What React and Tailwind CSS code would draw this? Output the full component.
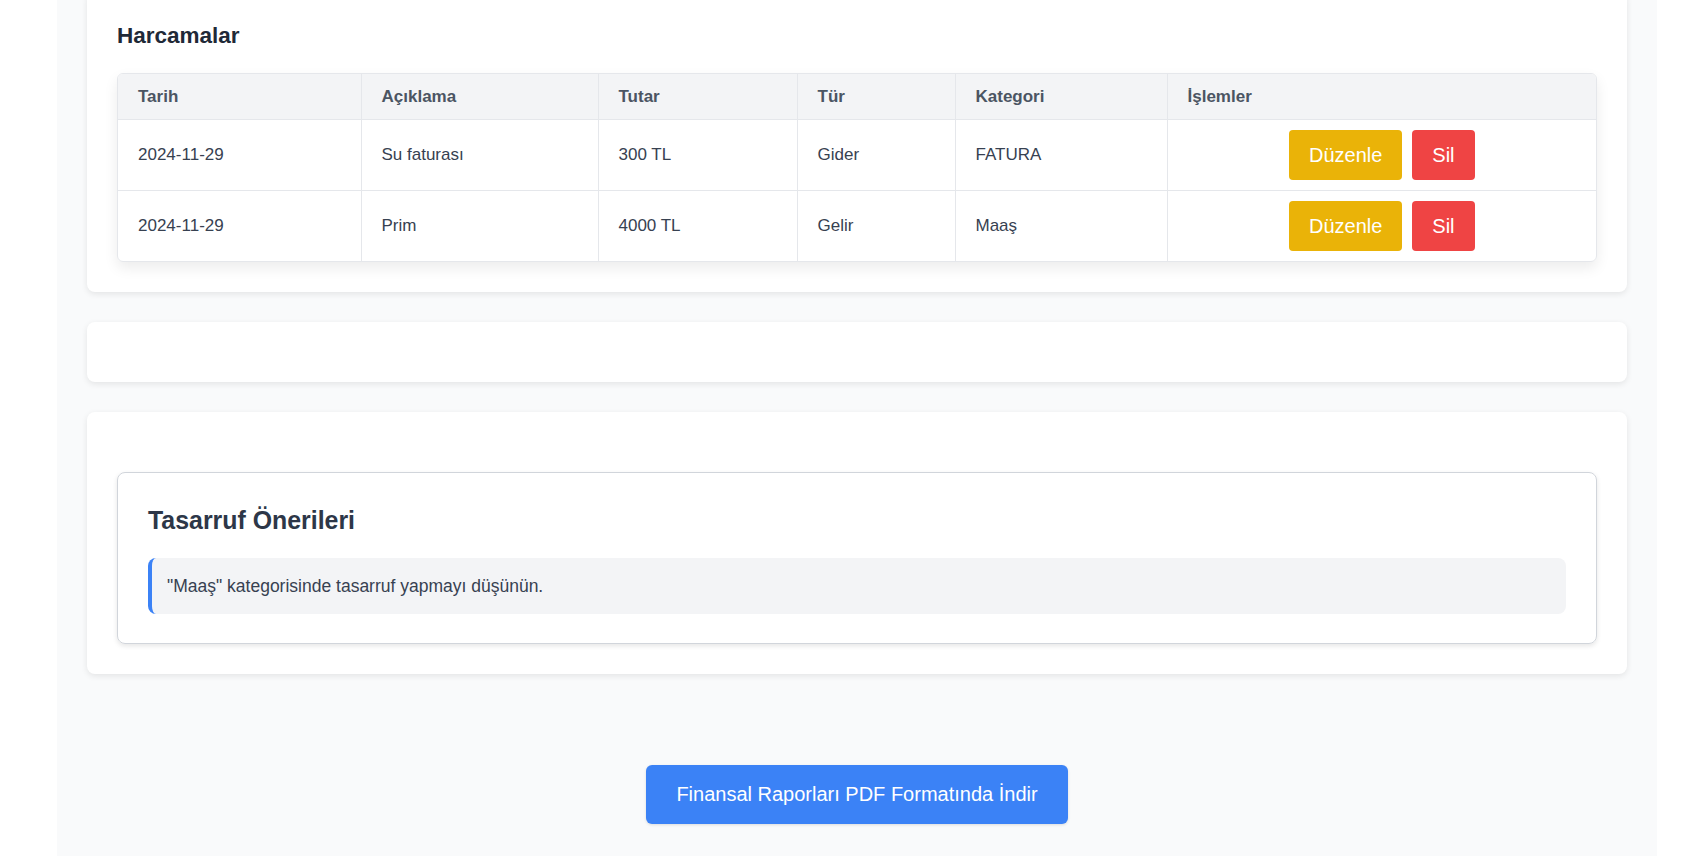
import React from 'react';

// ─── Data ────────────────────────────────────────────────────────
const columns = [
  { label: 'Tarih',    w: 'w-[243px]' },
  { label: 'Açıklama', w: 'w-[237px]' },
  { label: 'Tutar',    w: 'w-[199px]' },
  { label: 'Tür',      w: 'w-[158px]' },
  { label: 'Kategori', w: 'w-[212px]' },
  { label: 'İşlemler', w: '' },
];

const rows = [
  { date: '2024-11-29', desc: 'Su faturası', amount: '300 TL',  type: 'Gider', cat: 'FATURA' },
  { date: '2024-11-29', desc: 'Prim',        amount: '4000 TL', type: 'Gelir', cat: 'Maaş' },
];

// ─── Card ────────────────────────────────────────────────────────
const Card = ({ children, className = '' }) => (
  <div className={`bg-white rounded-lg shadow-[0_2px_6px_rgba(0,0,0,0.09)] px-[30px] ${className}`}>
    {children}
  </div>
);

// ─── Expenses table ──────────────────────────────────────────────
const ExpenseTable = () => (
  <div className="rounded-md overflow-hidden border border-[#e5e7eb] shadow-[0_6px_14px_rgba(0,0,0,0.08)]">
    <table className="w-full table-fixed border-collapse text-[17px]">
      <thead>
        <tr className="bg-[#f3f4f6] h-[45px]">
          {columns.map((c, i) => (
            <th key={c.label}
              className={`${c.w} px-5 text-left font-bold text-[#4b5563] border-b border-[#e5e7eb] ${i > 0 ? 'border-l' : ''}`}>
              {c.label}
            </th>
          ))}
        </tr>
      </thead>
      <tbody className="text-[#374151]">
        {rows.map((r, i) => (
          <tr key={i} className={i < rows.length - 1 ? 'border-b border-[#e5e7eb]' : ''}>
            <td className="px-5 py-[10px]">{r.date}</td>
            <td className="px-5 py-[10px] border-l border-[#e5e7eb]">{r.desc}</td>
            <td className="px-5 py-[10px] border-l border-[#e5e7eb]">{r.amount}</td>
            <td className="px-5 py-[10px] border-l border-[#e5e7eb]">{r.type}</td>
            <td className="px-5 py-[10px] border-l border-[#e5e7eb]">{r.cat}</td>
            <td className="px-5 py-[10px] border-l border-[#e5e7eb]">
              <div className="flex justify-center gap-[10px]">
                <button className="h-[50px] px-5 rounded bg-[#eab308] text-white text-[20px]">Düzenle</button>
                <button className="h-[50px] px-5 rounded bg-[#ef4444] text-white text-[20px]">Sil</button>
              </div>
            </td>
          </tr>
        ))}
      </tbody>
    </table>
  </div>
);

// ─── Page ────────────────────────────────────────────────────────
export default function App() {
  return (
    <div className="h-[856px] overflow-hidden bg-white font-['Liberation_Sans',Arial,sans-serif]">
      <div className="ml-[57px] w-[1600px] bg-[#f9fafb] px-[30px] pb-[40px] -mt-[8px] flex flex-col">
        {/* Harcamalar */}
        <Card className="py-[30px]">
          <h2 className="text-[22.5px] leading-[27px] font-bold text-[#1f2937] mb-[24px]">Harcamalar</h2>
          <ExpenseTable />
        </Card>

        {/* empty card */}
        <Card className="mt-[30px] h-[60px]" />

        {/* Tasarruf önerileri */}
        <Card className="mt-[30px] pt-[60px] pb-[30px]">
          <div className="border border-[#d1d5db] rounded-lg shadow-[0_2px_5px_rgba(0,0,0,0.1)] px-[30px] pt-[33px] pb-[29px]">
            <h3 className="text-[24.9px] leading-[29px] font-bold text-[#2d3748] mb-[23px]">Tasarruf Önerileri</h3>
            <div className="bg-[#f3f4f6] border-l-4 border-[#3b82f6] rounded-lg px-[15px] py-[15px] text-[17.5px] leading-[26px] text-[#374151]">
              "Maaş" kategorisinde tasarruf yapmayı düşünün.
            </div>
          </div>
        </Card>

        <div className="flex justify-center mt-[91px]">
          <button className="h-[59px] px-[30px] rounded-md bg-[#3b82f6] text-white text-[20px] shadow-[0_1px_3px_rgba(0,0,0,0.12)]">
            Finansal Raporları PDF Formatında İndir
          </button>
        </div>
      </div>
    </div>
  );
}
